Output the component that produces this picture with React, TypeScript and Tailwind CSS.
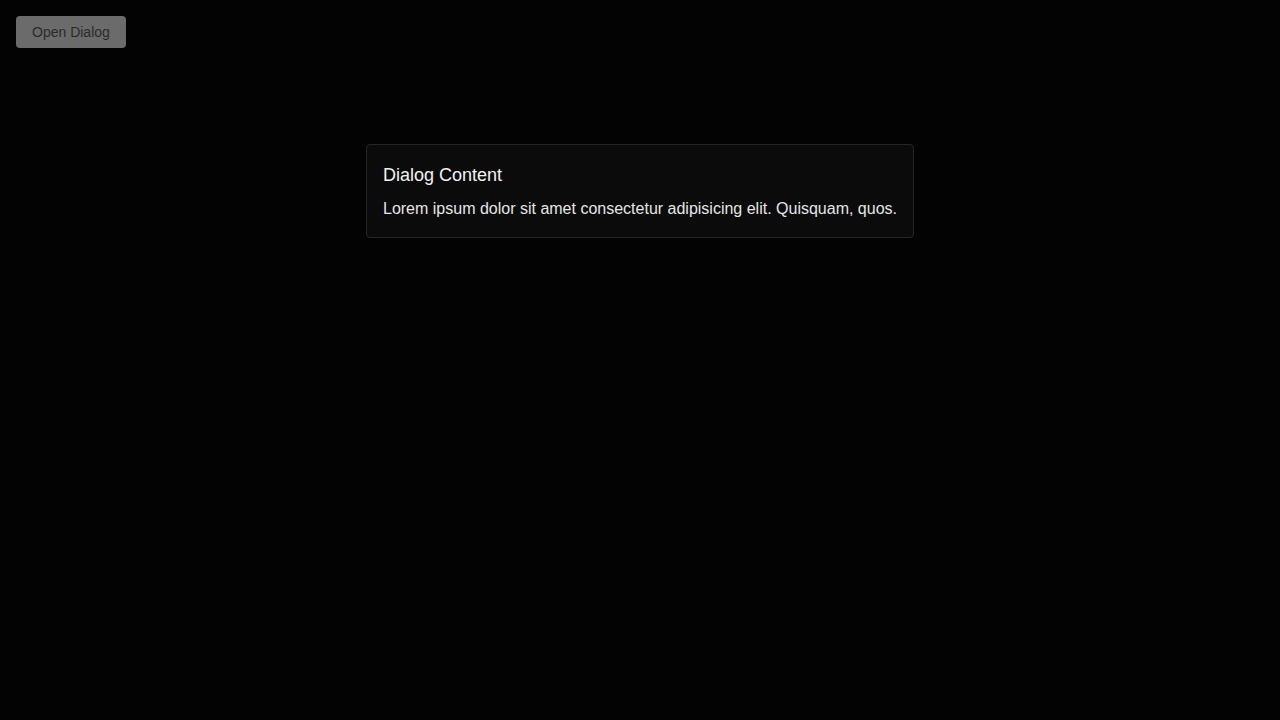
export default function App() {
  return (
    <div className="min-h-screen bg-[#030303] p-4 font-['Liberation_Sans',Arial,sans-serif]">
      <button className="h-8 rounded bg-[#6b6b6b] px-4 text-sm text-[#2a2a2a]">
        Open Dialog
      </button>
      <div className="mt-[96px] flex justify-center">
        <div className="rounded border border-[#262626] bg-[#0b0b0b] p-4">
          <h2 className="mb-2 text-lg leading-7 text-[#f2f2f2]">Dialog Content</h2>
          <p className="text-base leading-6 text-[#e6e6e6]">
            Lorem ipsum dolor sit amet consectetur adipisicing elit. Quisquam, quos.
          </p>
        </div>
      </div>
    </div>
  );
}
